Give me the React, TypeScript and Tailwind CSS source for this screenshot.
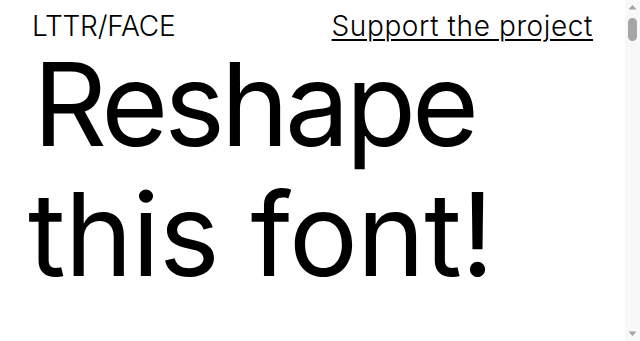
import React from "react";

function Scrollbar() {
  return (
    <aside className="w-[15px] h-full bg-[#f8f8f8] flex flex-col items-center shrink-0">
      <svg width="15" height="15" viewBox="0 0 15 15" className="shrink-0">
        <polygon points="3.5,9.5 11.5,9.5 7.5,5" fill="#a3a3a3" />
      </svg>
      <div className="mt-[3px] w-[9px] h-[23px] rounded-full bg-[#a6a6a6]" />
      <div className="flex-1" />
      <svg width="15" height="15" viewBox="0 0 15 15" className="shrink-0">
        <polygon points="3.5,5.5 11.5,5.5 7.5,10" fill="#a3a3a3" />
      </svg>
    </aside>
  );
}

export default function App() {
  return (
    <div className="h-screen overflow-hidden flex bg-white text-black" style={{ fontFamily: "Inter, 'Noto Sans', sans-serif" }}>
      <main className="flex-1 min-w-0">
        <header className="flex justify-between items-baseline px-8 pt-3 text-[28px] leading-7 font-light">
          <span className="tracking-[-0.2px]">LTTR/FACE</span>
          <a href="#" className="underline decoration-2 underline-offset-[3px] tracking-[0.6px]">Support the project</a>
        </header>
        <h1 className="pl-[33px] pr-8 text-[115px] leading-[130px] font-normal">
          <span className="tracking-[-4px]">Reshape</span>
          <br />
          <span className="-ml-[5px] tracking-[-0.8px]">this font!</span>
        </h1>
      </main>
      <Scrollbar />
    </div>
  );
}
